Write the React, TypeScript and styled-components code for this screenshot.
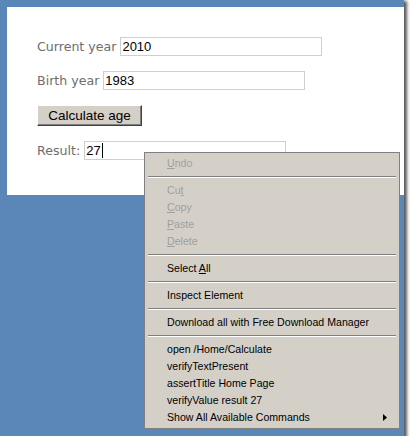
import React from 'react';
import styled, { createGlobalStyle } from 'styled-components';

const GlobalStyle = createGlobalStyle`
  html, body {
    margin: 0;
    padding: 0;
    background: #ffffff;
  }
`;

const Frame = styled.div`
  position: relative;
  width: 404px;
  height: 436px;
  box-sizing: border-box;
  padding: 7px 0 0 7px;
  background: #5b87b8;
  box-shadow: 2px 2px 3px 1px rgba(0, 0, 0, 0.65);
`;

const Panel = styled.div`
  height: 188px;
  box-sizing: border-box;
  padding: 30px 0 0 30px;
  background: #ffffff;
  display: flex;
  flex-direction: column;
  align-items: flex-start;
  gap: 15px;
`;

const Row = styled.div`
  display: flex;
  align-items: center;
`;

const Label = styled.span`
  font-family: 'DejaVu Sans', Verdana, sans-serif;
  font-size: 12.6px;
  color: #6e6e6e;
  margin-right: 4px;
`;

const Field = styled.div`
  width: 202px;
  height: 19px;
  box-sizing: border-box;
  border: 1px solid #cfcfcf;
  padding-left: 1px;
  display: flex;
  align-items: center;
  font-family: 'Liberation Sans', Arial, sans-serif;
  font-size: 13px;
  color: #000000;
`;

const Caret = styled.span`
  display: inline-block;
  width: 1px;
  height: 15px;
  margin-left: 1px;
  background: #000000;
`;

const Button = styled.button`
  width: 105px;
  height: 21px;
  padding: 0;
  background: #d4d0c8;
  border: 1px solid;
  border-color: #ffffff #404040 #404040 #ffffff;
  box-shadow: inset -1px -1px 0 #808080;
  font-family: 'Liberation Sans', Arial, sans-serif;
  font-size: 13.5px;
  color: #000000;
`;

const Menu = styled.div`
  position: absolute;
  left: 144px;
  top: 152px;
  width: 256px;
  box-sizing: border-box;
  padding: 2px 0;
  background: #d4d0c8;
  border: 1px solid #808080;
  font-family: Tahoma, 'Liberation Sans', Arial, sans-serif;
  font-size: 10.6px;
`;

const Item = styled.div<{ $disabled?: boolean }>`
  position: relative;
  height: 17px;
  line-height: 17px;
  padding-left: 22px;
  color: ${(p) => (p.$disabled ? '#a09f9c' : '#000000')};
  white-space: nowrap;
`;

const Separator = styled.div`
  height: 10px;
  display: flex;
  align-items: center;
  padding: 0 3px;

  &::after {
    content: '';
    flex: 1;
    height: 0;
    border-top: 1px solid #808080;
    border-bottom: 1px solid #ffffff;
  }
`;

const Arrow = styled.svg`
  position: absolute;
  right: 12px;
  top: 5px;
`;

const Key = ({ children }: { children: string }) => <u>{children}</u>;

export default function App() {
  return (
    <Frame>
      <GlobalStyle />
      <Panel>
        <Row>
          <Label>Current year</Label>
          <Field>2010</Field>
        </Row>
        <Row>
          <Label>Birth year</Label>
          <Field>1983</Field>
        </Row>
        <Button>Calculate age</Button>
        <Row>
          <Label>Result:</Label>
          <Field>
            27
            <Caret />
          </Field>
        </Row>
      </Panel>

      <Menu>
        <Item $disabled>
          <Key>U</Key>ndo
        </Item>
        <Separator />
        <Item $disabled>
          Cu<Key>t</Key>
        </Item>
        <Item $disabled>
          <Key>C</Key>opy
        </Item>
        <Item $disabled>
          <Key>P</Key>aste
        </Item>
        <Item $disabled>
          <Key>D</Key>elete
        </Item>
        <Separator />
        <Item>
          Select <Key>A</Key>ll
        </Item>
        <Separator />
        <Item>Inspect Element</Item>
        <Separator />
        <Item>Download all with Free Download Manager</Item>
        <Separator />
        <Item>open /Home/Calculate</Item>
        <Item>verifyTextPresent</Item>
        <Item>assertTitle Home Page</Item>
        <Item>verifyValue result 27</Item>
        <Item>
          Show All Available Commands
          <Arrow width="4" height="7" viewBox="0 0 4 7">
            <path d="M0 0 L4 3.5 L0 7 Z" fill="#000" />
          </Arrow>
        </Item>
      </Menu>
    </Frame>
  );
}
